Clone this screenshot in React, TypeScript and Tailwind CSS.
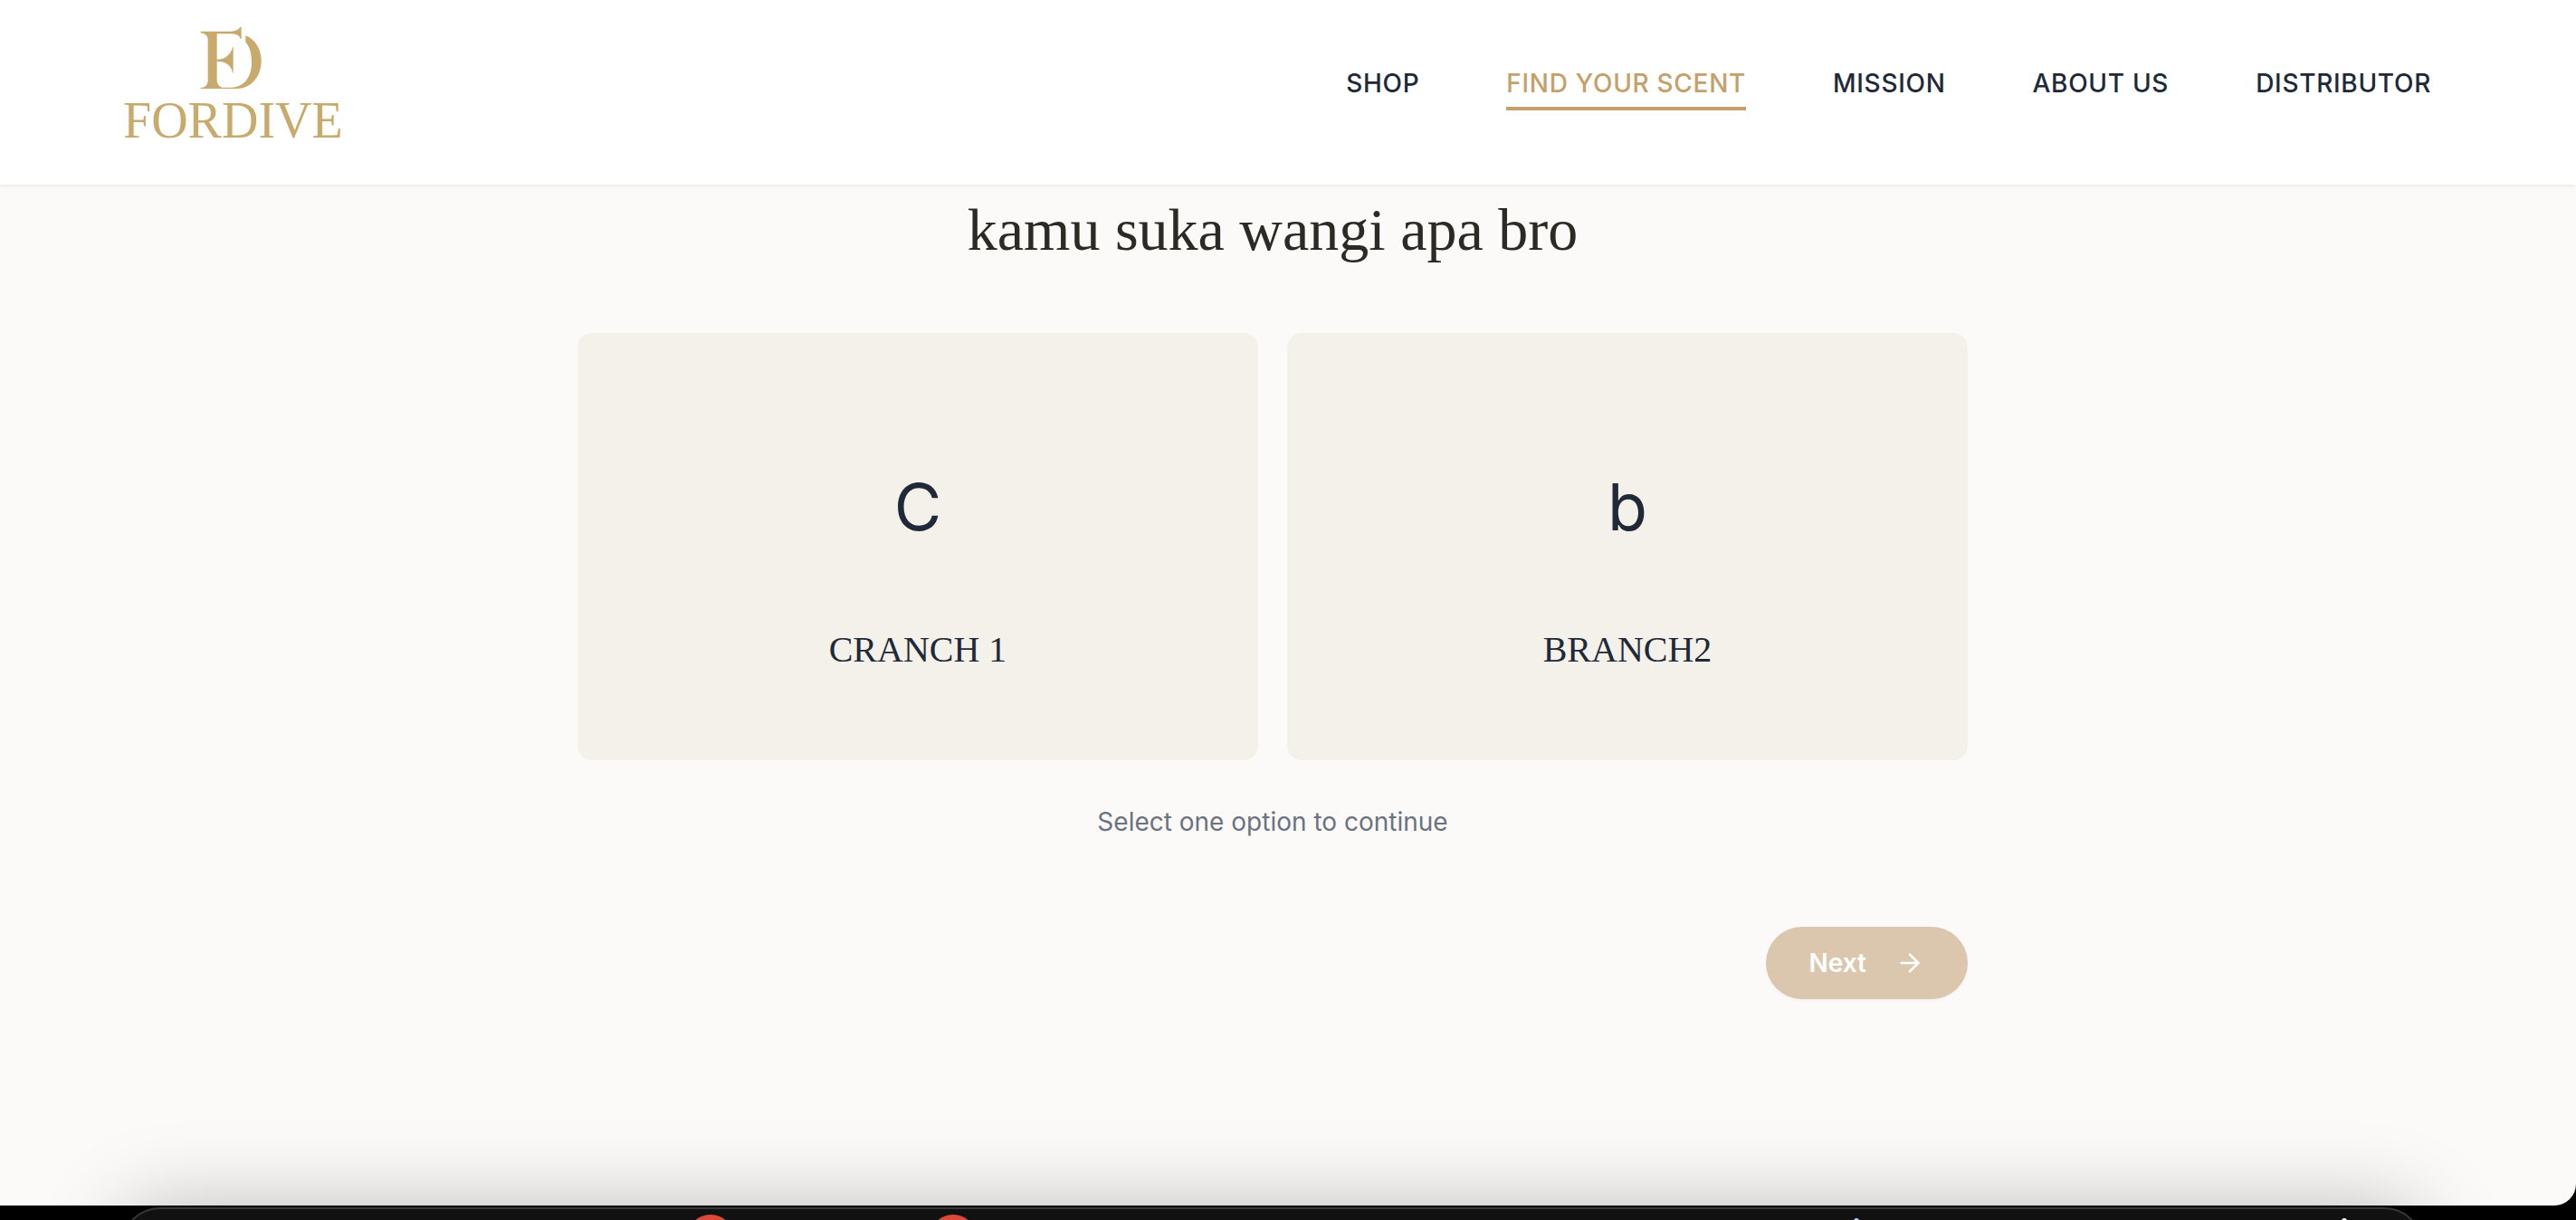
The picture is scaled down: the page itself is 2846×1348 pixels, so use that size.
import { ArrowRight } from "lucide-react";
import { useState } from "react";

const links = [
  { label: "SHOP", active: false },
  { label: "FIND YOUR SCENT", active: true },
  { label: "MISSION", active: false },
  { label: "ABOUT US", active: false },
  { label: "DISTRIBUTOR", active: false },
];

const options = [
  { initial: "C", name: "CRANCH 1" },
  { initial: "b", name: "BRANCH2" },
];

function Emblem() {
  return (
    <svg viewBox="304 58 204 210" className="mr-1 h-[70px] w-[68px]" fill="currentColor" aria-hidden="true">
      <path d="M306 75H408Q428 74 438 60H441V100H438Q434 84 408 83H360V168Q384 168 398 153Q410 141 412 127H414V213H412Q410 198 398 186Q384 174 360 174V238Q362 257 378 261H408C452 259 475 225 475 178C475 146 468 124 455 111V89C486 101 507 133 507 172C507 226 472 265 425 265H306V262Q328 260 330 240V100Q328 83 306 80Z" />
    </svg>
  );
}

function Header() {
  return (
    <header className="relative flex h-[204px] shrink-0 items-start justify-between bg-white pr-[160px] pl-[136px] shadow-[0_2px_4px_rgba(0,0,0,0.06)]">
      <a href="#home" aria-label="Fordive" className="flex flex-col items-center pt-[29px] text-[#c9aa6d]">
        <Emblem />
        <span className="font-['Liberation_Serif',serif] text-[56px] leading-[68px]">FORDIVE</span>
      </a>
      <nav className="flex gap-24 pt-[72px]">
        {links.map((link) => (
          <a
            key={link.label}
            href="#"
            aria-current={link.active ? "page" : undefined}
            className={
              link.active
                ? "border-b-4 border-[#c4a06a] pb-[6px] text-[28px] leading-10 font-medium tracking-wide text-[#c4a06a]"
                : "border-b-4 border-transparent pb-[6px] text-[28px] leading-10 font-medium tracking-wide text-[#1f2937]"
            }
          >
            {link.label}
          </a>
        ))}
      </nav>
    </header>
  );
}

function Dock() {
  return (
    <div className="relative h-4 shrink-0">
      <div className="absolute top-[2px] right-[168px] left-[133px] h-40 rounded-[44px] border-2 border-[#383838] bg-[#111111] shadow-[0_0_90px_rgba(0,0,0,0.25)]">
        <span className="absolute top-[6px] left-[624px] size-[52px] rounded-full bg-[#da4a3a]" />
        <span className="absolute top-[6px] left-[892px] size-[52px] rounded-full bg-[#da4a3a]" />
        <span className="absolute top-[10px] right-[622px] size-[6px] rounded-full bg-[#b8d0f0]" />
        <span className="absolute top-[10px] right-[83px] size-[6px] rounded-full bg-white" />
      </div>
    </div>
  );
}

export default function App() {
  const [selected, setSelected] = useState<string | null>(null);

  return (
    <div className="flex h-screen flex-col overflow-hidden bg-black font-['Inter',sans-serif]">
      <div className="flex min-h-0 grow flex-col overflow-hidden rounded-br-3xl bg-[#fbfaf8]">
        <Header />
        <main className="flex grow flex-col pr-[34px]">
          <div className="mx-auto flex w-full max-w-[1536px] flex-col">
            <h1 className="pt-[10px] text-center font-['Liberation_Serif',serif] text-[66px] leading-[80px] text-[#2c2a25]">
              kamu suka wangi apa bro
            </h1>
            <div className="mt-[74px] grid grid-cols-2 gap-8">
              {options.map((option) => (
                <button
                  key={option.name}
                  type="button"
                  aria-pressed={selected === option.name}
                  onClick={() => setSelected(option.name)}
                  className="flex h-[472px] flex-col items-center rounded-2xl bg-[#f4f1ea] pt-[152px] text-[#1f2937]"
                >
                  <span className="text-[72px] leading-[80px]">{option.initial}</span>
                  <span className="mt-[90px] font-['Liberation_Serif',serif] text-[40px] leading-[56px]">
                    {option.name}
                  </span>
                </button>
              ))}
            </div>
            <p className="mt-12 text-center text-[28px] leading-10 text-[#6b7280]">Select one option to continue</p>
            <div className="mt-24 flex justify-end">
              <button
                type="button"
                className="flex h-20 items-center gap-8 rounded-full bg-[#dbc7ae] px-12 text-[28px] leading-10 font-semibold text-white shadow-[0_2px_4px_rgba(0,0,0,0.03)]"
              >
                Next
                <ArrowRight size={32} strokeWidth={2} />
              </button>
            </div>
          </div>
        </main>
      </div>
      <Dock />
    </div>
  );
}
